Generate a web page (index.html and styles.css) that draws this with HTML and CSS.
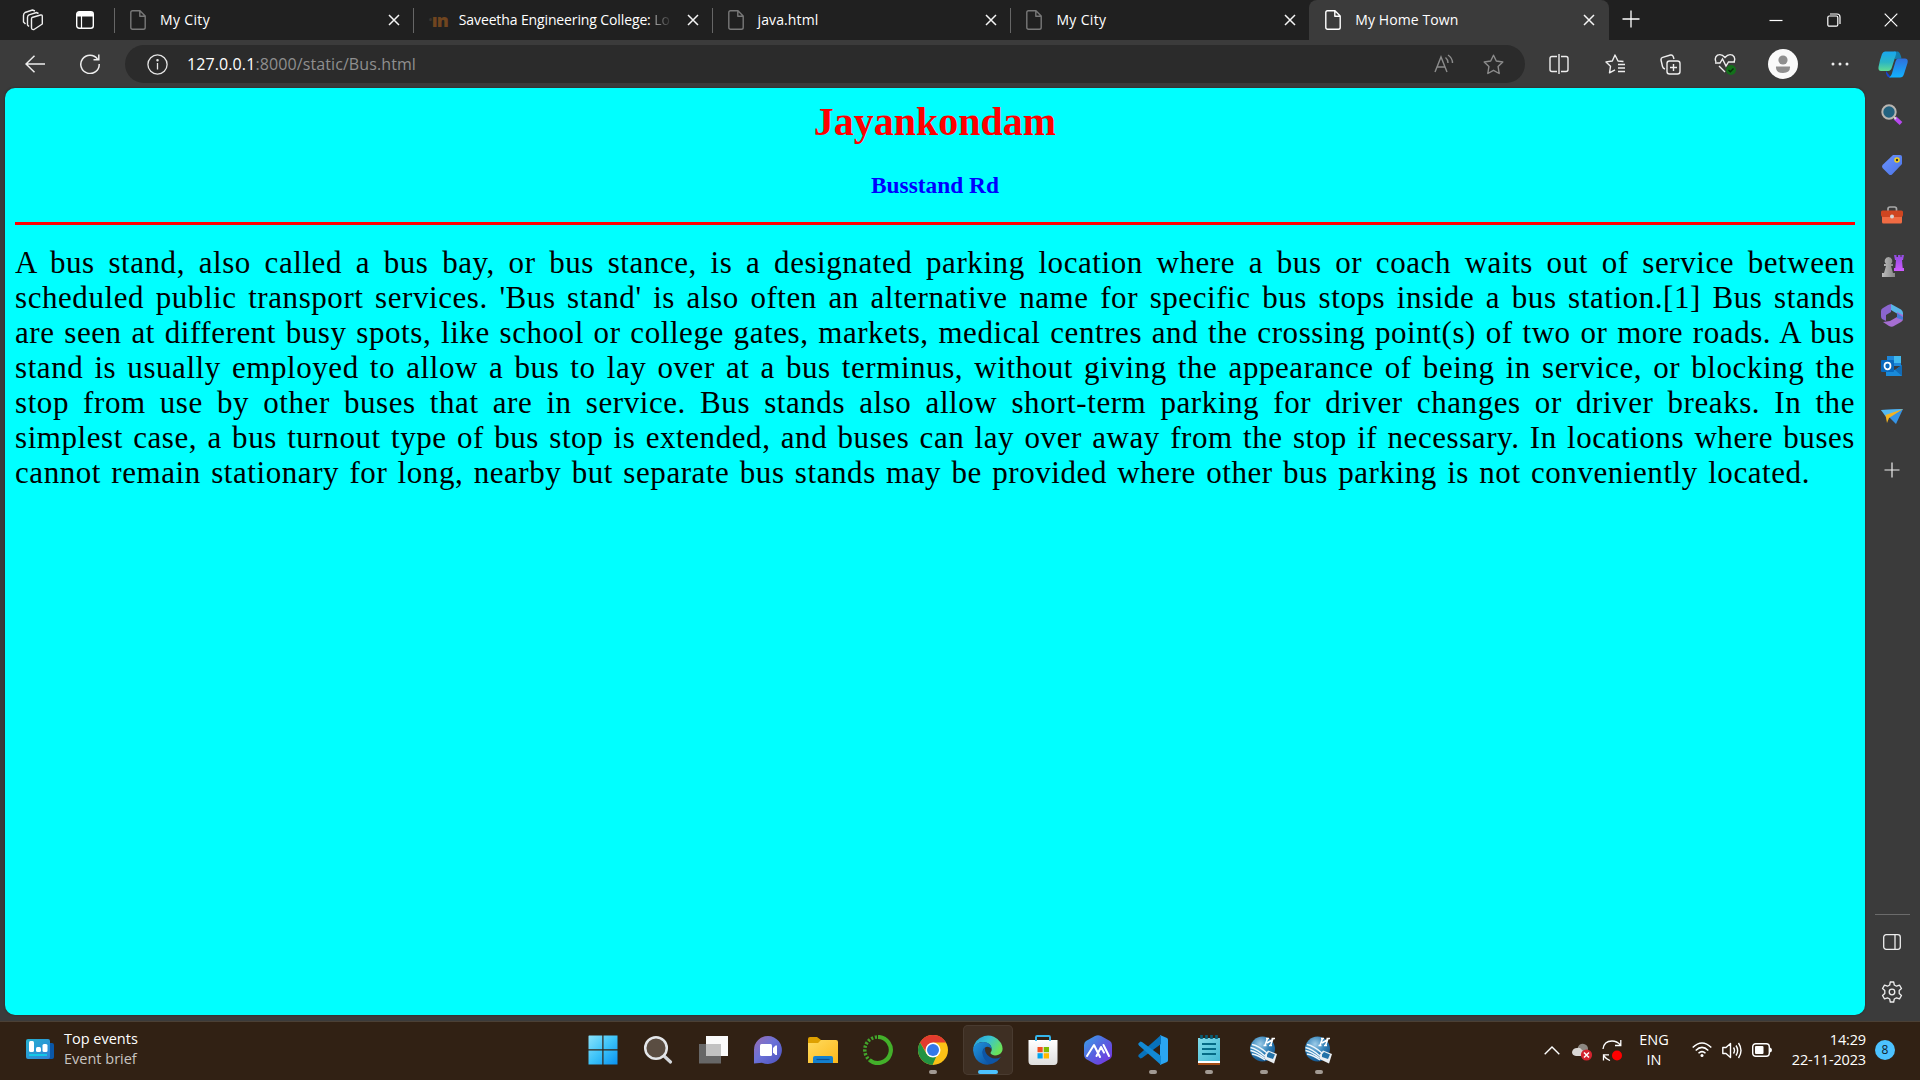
FILE: index.html
```
<!DOCTYPE html>
<html lang="en">
<head>
<meta charset="utf-8">
<title>My Home Town</title>
<link rel="stylesheet" href="styles.css">
</head>
<body>
<svg class="defs" width="0" height="0">
  <defs>
    <linearGradient id="gWin" x1="0" y1="0" x2="1" y2="1"><stop offset="0" stop-color="#8be3fb"/><stop offset=".5" stop-color="#3cc3f9"/><stop offset="1" stop-color="#0a91f0"/></linearGradient>
    <linearGradient id="gChat" x1="0" y1="0" x2="1" y2="1"><stop offset="0" stop-color="#9a6cb0"/><stop offset=".45" stop-color="#6c72d8"/><stop offset="1" stop-color="#4b50bd"/></linearGradient>
    <linearGradient id="gFolder" x1="0" y1="0" x2="1" y2="1"><stop offset="0" stop-color="#ffdb5e"/><stop offset="1" stop-color="#fcb81b"/></linearGradient>
    <linearGradient id="gEdge" x1="0" y1="0" x2="1" y2=".5"><stop offset="0" stop-color="#2397d8"/><stop offset=".5" stop-color="#38c2d5"/><stop offset="1" stop-color="#69e25a"/></linearGradient>
    <linearGradient id="gEdge2" x1="0" y1="0" x2="1" y2="1"><stop offset="0" stop-color="#2196e0"/><stop offset="1" stop-color="#0a4b9c"/></linearGradient>
    <linearGradient id="gHex" x1="0" y1="0" x2="1" y2="1"><stop offset="0" stop-color="#39a4e8"/><stop offset=".5" stop-color="#5760e0"/><stop offset="1" stop-color="#7a2ee0"/></linearGradient>
    <linearGradient id="gCopA" x1="0" y1="0" x2="0" y2="1"><stop offset="0" stop-color="#18a7f0"/><stop offset=".55" stop-color="#2bb5c5"/><stop offset="1" stop-color="#62dc92"/></linearGradient>
    <linearGradient id="gCopB" x1="0" y1="0" x2="0" y2="1"><stop offset="0" stop-color="#2f6fdc"/><stop offset="1" stop-color="#12b2ff"/></linearGradient>
    <linearGradient id="gTag" x1="0" y1="0" x2="1" y2="1"><stop offset="0" stop-color="#6b93ff"/><stop offset="1" stop-color="#4a73e6"/></linearGradient>
    <linearGradient id="gRook" x1="0" y1="0" x2="0" y2="1"><stop offset="0" stop-color="#8f4be0"/><stop offset="1" stop-color="#d05cff"/></linearGradient>
    <linearGradient id="gPawn" x1="0" y1="0" x2="1" y2="0"><stop offset="0" stop-color="#bdbdbd"/><stop offset="1" stop-color="#858585"/></linearGradient>
    <radialGradient id="gGlobe" cx=".4" cy=".3" r=".8"><stop offset="0" stop-color="#9ccbe8"/><stop offset=".5" stop-color="#2f80b8"/><stop offset="1" stop-color="#0e4a80"/></radialGradient>
    <linearGradient id="gWid" x1="0" y1="0" x2="1" y2="1"><stop offset="0" stop-color="#26b0d0"/><stop offset="1" stop-color="#2f82d8"/></linearGradient>
    <linearGradient id="gNote" x1="0" y1="0" x2="1" y2="1"><stop offset="0" stop-color="#7fdbe9"/><stop offset="1" stop-color="#42b8d3"/></linearGradient>
    <linearGradient id="gBag" x1="0" y1="0" x2="0" y2="1"><stop offset="0" stop-color="#fff"/><stop offset="1" stop-color="#dedede"/></linearGradient>
    <symbol id="file" viewBox="0 0 16 20"><path d="M2.500.8H10L15.200 6V17.400Q15.200 19.200 13.400 19.200H2.600Q.8 19.200.8 17.400V2.600Q.8.8 2.500.8ZM9.800 1V6.200H15" fill="none" stroke="currentColor" stroke-width="1.400" stroke-linejoin="round"/></symbol>
    <symbol id="cross" viewBox="0 0 12 12"><path d="M1 1L11 11M11 1L1 11" stroke="#f5f5f5" stroke-width="1.500" fill="none"/></symbol>
    <symbol id="globe" viewBox="0 0 30 30">
      <circle cx="13.500" cy="14" r="12.500" fill="url(#gGlobe)"/>
      <g fill="none" stroke="#eef7fc" stroke-width="1.300"><path d="M1.500 12.500Q8 14 16 21"/><path d="M1.500 15.500Q8 17 15.500 23"/><path d="M3 19Q9 20 16 25"/><path d="M3 9.500Q10 11 18 18"/></g>
      <path d="M16 10.500L18.500 3.500M21.500 10.500L24 3.500M17 3.500H20M22.500 3.500H26M14.500 10.500H17.500M20 10.500H23M18 8L23 5" stroke="#fff" stroke-width="1.600" fill="none"/>
      <path d="M15.500 20L19 15.500L28 19L25 28.500L15.500 24Z" fill="#e9eef2"/><path d="M18 19.500L20 17L26 19.500L24 24L18 22Z" fill="#2372a8"/>
    </symbol>
  </defs>
</svg>

<div class="screen">
  <header class="tabstrip">
    <div class="strip-tools">
      <svg width="22" height="22" viewBox="0 0 22 22" fill="none" stroke="#eee" stroke-width="1.400" stroke-linejoin="round"><path d="M10 8.500L18.500 6Q20.300 5.500 20.300 7.500V15L12 20.500Q9.500 21 9.500 18.500V10Q9.500 8.800 10 8.500Z"/><path d="M7 17.500L5.500 16V8.500Q5.500 6.500 7 5.800L14.500 3.500L16.500 4.500"/><path d="M3.500 15L1.500 13V6.500Q1.500 4.500 3 3.500L10.500 1L13 2"/></svg>
      <svg width="18" height="18" viewBox="0 0 18 18"><rect x=".7" y=".7" width="16.600" height="16.600" rx="2.500" fill="none" stroke="#fff" stroke-width="1.400"/><path d="M1 3Q1 1 3 1H15Q17 1 17 3V5.500H1Z" fill="#fff"/><path d="M5.500 5V17" stroke="#fff" stroke-width="1.200"/></svg>
    </div>
    <div class="tab"><svg class="favicon" width="16" height="20"><use href="#file"/></svg><span class="tab-title">My City</span><svg class="tab-close" width="12" height="12"><use href="#cross"/></svg></div>
    <div class="tab"><span class="moodle"><i>•</i>ın</span><span class="tab-title long">Saveetha Engineering College: <em>Lo</em></span><svg class="tab-close" width="12" height="12"><use href="#cross"/></svg></div>
    <div class="tab"><svg class="favicon" width="16" height="20"><use href="#file"/></svg><span class="tab-title mid">java.html</span><svg class="tab-close" width="12" height="12"><use href="#cross"/></svg></div>
    <div class="tab"><svg class="favicon" width="16" height="20"><use href="#file"/></svg><span class="tab-title">My City</span><svg class="tab-close" width="12" height="12"><use href="#cross"/></svg></div>
    <div class="tab active"><svg class="favicon" width="16" height="20"><use href="#file"/></svg><span class="tab-title mid">My Home Town</span><svg class="tab-close" width="12" height="12"><use href="#cross"/></svg></div>
    <svg class="new-tab" width="18" height="18" viewBox="0 0 18 18"><path d="M9 .5V17.500M.5 9H17.500" stroke="#fff" stroke-width="1.300"/></svg>
    <div class="window-controls">
      <svg width="14" height="14" viewBox="0 0 14 14"><path d="M.5 7.500H13.500" stroke="#fff" stroke-width="1.200"/></svg>
      <svg width="14" height="14" viewBox="0 0 14 14" fill="none" stroke="#fff" stroke-width="1.200"><rect x=".8" y="3" width="10" height="10.200" rx="1.500"/><path d="M3 1H10Q13 1 13 4V11"/></svg>
      <svg width="14" height="14" viewBox="0 0 14 14"><path d="M.7.7L13.300 13.300M13.300.7L.7 13.300" stroke="#fff" stroke-width="1.200"/></svg>
    </div>
  </header>

  <div class="toolbar">
    <div class="nav">
      <svg width="20" height="18" viewBox="0 0 20 18" fill="none" stroke="#eee" stroke-width="1.500"><path d="M9.500.8L1 9L9.500 17.200M1 9H20"/></svg>
      <svg width="20" height="20" viewBox="0 0 20 20" fill="none" stroke="#eee" stroke-width="1.500"><path d="M17.500 5A9.200 9.200 0 1 0 19.200 10M18.800.5V5.800H13.500"/></svg>
    </div>
    <div class="address">
      <svg width="21" height="21" viewBox="0 0 21 21" fill="none" stroke="#e6e6e6" stroke-width="1.300"><circle cx="10.500" cy="10.500" r="9.600"/><path d="M10.500 9V15.500"/><circle cx="10.500" cy="6.300" r=".6" fill="#e6e6e6"/></svg>
      <span class="url"><b>127.0.0.1</b>:8000/static/Bus.html</span>
      <svg class="read" width="20" height="20" viewBox="0 0 20 20" fill="none" stroke="#8c8c8c" stroke-width="1.400"><path d="M1 18L7 3L13 18M3 13H11M11.500 3.500Q14 5.500 14 9M14 1Q18.500 4 18.500 9"/></svg>
      <svg class="star" width="21" height="21" viewBox="0 0 21 21" fill="none" stroke="#8c8c8c" stroke-width="1.400" stroke-linejoin="round"><path d="M10.500 1.200L13.300 7L19.800 8L15.100 12.600L16.200 19.500L10.500 16.300L4.800 19.500L5.900 12.600L1.200 8L7.700 7Z"/></svg>
    </div>
    <div class="actions">
      <svg width="20" height="20" viewBox="0 0 20 20" fill="none" stroke="#eee" stroke-width="1.400"><path d="M8 2.500H3Q1 2.500 1 4.500V15.500Q1 17.500 3 17.500H8M12 2.500H17Q19 2.500 19 4.500V15.500Q19 17.500 17 17.500H12M10 0V20"/></svg>
      <svg width="21" height="20" viewBox="0 0 21 20" fill="none" stroke="#eee" stroke-width="1.400" stroke-linejoin="round"><path d="M18.500 7.500L13 7L10 1L7.300 7L1 7.900L5.500 12.300L4.500 18.800L10 15.800M13 10.500H20M13 14H20M13 17.500H20"/></svg>
      <svg width="21" height="21" viewBox="0 0 21 21" fill="none" stroke="#eee" stroke-width="1.400"><rect x="7" y="7" width="13" height="13" rx="2.500"/><path d="M13.500 10V17M10 13.500H17M5 15Q3 14.500 2.500 12.500L1 6Q.7 4 2.700 3.400L10.500 1Q12.500.6 13.200 2.500L14 5"/></svg>
      <svg width="22" height="22" viewBox="0 0 22 22" fill="none" stroke="#eee" stroke-width="1.400"><path d="M2 9Q0 4.500 3.500 2.200Q7.500.3 11 4.500Q14.500.3 18.500 2.200Q22 4.500 20 9M1 10H6L8.500 6L12 13L14.500 9H21M5 13L11 19"/><circle cx="17" cy="17" r="5" fill="#13701b" stroke="none"/><path d="M14.500 17L16.300 18.800L19.500 15.500" stroke="#062d0a"/></svg>
      <svg width="30" height="30" viewBox="0 0 30 30"><circle cx="15" cy="15" r="15" fill="#fafafa"/><circle cx="15" cy="11" r="4.600" fill="#8f8f8f"/><path d="M8 17.500H22Q22.500 24 15 24Q7.500 24 8 17.500Z" fill="#8f8f8f"/></svg>
      <svg width="18" height="4" viewBox="0 0 18 4" fill="#eee"><circle cx="2" cy="2" r="1.500"/><circle cx="9" cy="2" r="1.500"/><circle cx="16" cy="2" r="1.500"/></svg>
      <svg width="30" height="27" viewBox="0 0 30 27"><path d="M8 20L13 26.500Q9 27 8 22Z" fill="#1747d0"/><path d="M16 .5H20Q22 1 23.500 7.500L17 8Z" fill="#137dae"/><path d="M7 .5H17Q19 .5 17.500 5L14 16Q13 20 10 20H3Q0 20 .5 16Q2 8 4 3Q5 .5 7 .5Z" fill="url(#gCopA)"/><path d="M20 7.500H27Q30.500 7.500 29.500 12L26 23Q25 26.500 22 26.500H11Q13.500 25 14.500 20.500L17.500 10.500Q18.500 7.500 20 7.500Z" fill="url(#gCopB)"/></svg>
    </div>
  </div>

  <div class="middle">
    <main class="page">
      <h1>Jayankondam</h1>
      <h3>Busstand Rd</h3>
      <hr>
      <p class="story">
        <span>A bus stand, also called a bus bay, or bus stance, is a designated parking location where a bus or coach waits out of service between</span>
        <span>scheduled public transport services. 'Bus stand' is also often an alternative name for specific bus stops inside a bus station.[1] Bus stands</span>
        <span>are seen at different busy spots, like school or college gates, markets, medical centres and the crossing point(s) of two or more roads. A bus</span>
        <span>stand is usually employed to allow a bus to lay over at a bus terminus, without giving the appearance of being in service, or blocking the</span>
        <span>stop from use by other buses that are in service. Bus stands also allow short-term parking for driver changes or driver breaks. In the</span>
        <span>simplest case, a bus turnout type of bus stop is extended, and buses can lay over away from the stop if necessary. In locations where buses</span>
        <span class="last">cannot remain stationary for long, nearby but separate bus stands may be provided where other bus parking is not conveniently located.</span>
      </p>
    </main>
    <aside class="sidebar">
      <div class="side-apps">
        <svg width="22" height="22" viewBox="0 0 22 22"><path d="M14 14L20 19.500" stroke="#b648ee" stroke-width="4"/><path d="M12.500 12.500L15 15" stroke="#ddd" stroke-width="2"/><circle cx="8" cy="8" r="6.700" fill="#23627f" stroke="#b9b5b1" stroke-width="2"/></svg>
        <svg width="22" height="22" viewBox="0 0 22 22"><path d="M12 1H19Q21 1 21 3V10L11 20.500Q9.500 21.500 8 20.500L1.500 14Q.5 12.500 1.500 11Z" fill="url(#gTag)"/><circle cx="16" cy="6" r="2" fill="#333" stroke="#f3cf1d" stroke-width="1.600"/></svg>
        <svg width="22" height="18" viewBox="0 0 22 18"><path d="M7 5V3Q7 1 9 1H13.500Q15.500 1 15.500 3V5" fill="none" stroke="#a9a9a9" stroke-width="1.700"/><rect x="1" y="8" width="20" height="9.500" rx="1.500" fill="#f06b43"/><path d="M0 6Q0 4.500 1.500 4.500H20.500Q22 4.500 22 6V9Q22 11 20 11H2Q0 11 0 9Z" fill="#cf4520"/><circle cx="11" cy="10.500" r="2" fill="#d5d5d5"/></svg>
        <svg width="23" height="24" viewBox="0 0 23 24"><path d="M13 1H15.500V3H17V1H19.500V3H20.500V1H23L22 6H21L21.700 14H23V17H13V14H14.300L15 6H14Z" fill="url(#gRook)"/><path d="M7.500 3A4 4 0 0 1 10 10H12V12H10L12 19H14V23H1V19H3L5 12H3V10H5A4 4 0 0 1 7.500 3Z" fill="url(#gPawn)"/></svg>
        <svg width="22" height="23" viewBox="0 0 22 23"><path d="M7 1L10 0V8L5 11V17L1 15Q0 14 0 12V7Q0 5 2 4Z" fill="#8b65cf"/><path d="M10 0L20 5.500Q22 7 22 9V13L15 9L10 6Z" fill="#58b5e9"/><path d="M22 11V15Q22 17 20 18L12 22.500Q10 23 8 22L2 18L9 17L16 13V8Z" fill="#a66ed2"/><path d="M16 9L22 13V16L16 14Z" fill="#4779d9"/></svg>
        <svg width="22" height="20" viewBox="0 0 22 20"><path d="M6 0H20V10H6Z" fill="#1c86d9"/><path d="M13 0H20V7H13Z" fill="#40b9ed"/><path d="M5 11L14 14L21 9V20H5Z" fill="#198ada"/><path d="M14 14L21 9V20Z" fill="#126bb5"/><rect y="4" width="13" height="12" rx="1" fill="#0969bd"/><ellipse cx="6.500" cy="10" rx="3" ry="3.300" fill="none" stroke="#fff" stroke-width="1.700"/></svg>
        <svg width="22" height="17" viewBox="0 0 22 17"><path d="M0 2L22 1L15 16L9 10Z" fill="#3694e6"/><path d="M0 2L22 1L5 9Z" fill="#55b8f0"/><path d="M4.500 7L22 1L8 10L6 15Z" fill="#f4b321"/></svg>
        <svg class="add" width="16" height="16" viewBox="0 0 16 16"><path d="M8 .5V15.500M.5 8H15.500" stroke="#eee" stroke-width="1.200"/></svg>
      </div>
      <div class="side-bottom">
        <svg width="18" height="16" viewBox="0 0 18 16" fill="none" stroke="#eee" stroke-width="1.300"><rect x=".7" y=".7" width="16.600" height="14.600" rx="2.500"/><path d="M12 1V15"/></svg>
        <svg width="22" height="22" viewBox="0 0 22 22" fill="none" stroke="#eee" stroke-width="1.300" stroke-linejoin="round"><circle cx="11" cy="11" r="2.800"/><path d="M9.300 1H12.700L13.300 4L15.500 5.200L18.500 4.200L20.500 7.500L18.200 9.600V12.400L20.500 14.500L18.500 17.800L15.500 16.800L13.300 18L12.700 21H9.300L8.700 18L6.500 16.800L3.500 17.800L1.500 14.500L3.800 12.400V9.600L1.500 7.500L3.500 4.200L6.500 5.200L8.700 4Z"/></svg>
      </div>
    </aside>
  </div>

  <footer class="taskbar">
    <div class="widgets">
      <svg width="28" height="20" viewBox="0 0 28 20"><rect x="18" y="4" width="10" height="16" rx="2" fill="#0a57a8"/><rect width="24" height="20" rx="2" fill="url(#gWid)"/><rect x="3" y="2" width="5" height="11" rx="1.500" fill="#fff"/><rect x="10" y="8" width="5" height="5" rx="1.500" fill="#fff"/><rect x="16.500" y="5" width="5" height="8" rx="1.500" fill="#fff"/><path d="M3 16H21" stroke="#12cfe9" stroke-width="1.800"/></svg>
      <div class="widget-text"><span>Top events</span><span class="dim">Event brief</span></div>
    </div>
    <div class="apps">
      <div class="app"><svg width="30" height="30" viewBox="0 0 30 30"><path d="M1 .5H14.300V14.300H.5V1ZM15.500.5H29.500V14.300H15.500ZM.5 15.500H14.300V29.500H.5ZM15.500 15.500H29.500V29.500H15.500Z" fill="url(#gWin)"/></svg></div>
      <div class="app"><svg width="30" height="30" viewBox="0 0 30 30"><path d="M20 20L27.500 27" stroke="#d4d7db" stroke-width="3.200" stroke-linecap="round"/><circle cx="13" cy="13" r="10.800" fill="#5a4d42" stroke="#e4e6e9" stroke-width="2.500"/></svg></div>
      <div class="app"><svg width="30" height="30" viewBox="0 0 30 30"><rect x="1" y="9" width="22" height="19.500" fill="#676767"/><rect x="8" y="1" width="22" height="20" fill="#fafafa"/><rect x="8" y="9" width="15" height="12" fill="#c2c2c2"/></svg></div>
      <div class="app"><svg width="30" height="30" viewBox="0 0 30 30"><path d="M15 1A14 14 0 1 1 9 27.700L1 28.500V15A14 14 0 0 1 15 1Z" fill="url(#gChat)"/><rect x="7" y="9" width="12" height="12" rx="1.500" fill="#fff"/><path d="M20 13L22.500 10.500H24V20H22.500L20 17.500Z" fill="#fff"/></svg></div>
      <div class="app"><svg width="30" height="30" viewBox="0 0 30 30"><path d="M0 4Q0 2 2 2H9L13 5H17V12H0Z" fill="#dea000"/><path d="M0 8H10L13 5H28Q30 5 30 7V28H0Z" fill="url(#gFolder)"/><path d="M5 28V23Q5 21 7 21H23Q25 21 25 23V28Z" fill="#1380cf"/><path d="M8.500 24.500H21.500" stroke="#0a4e92" stroke-width="1.200"/></svg></div>
      <div class="app"><svg width="30" height="30" viewBox="0 0 30 30"><path d="M15 2A13 13 0 1 1 6.500 25" fill="none" stroke="#43b02a" stroke-width="4.200"/><path d="M14 2A13 13 0 0 0 6.500 25" fill="none" stroke="#43a52c" stroke-width="3.500" stroke-dasharray="2.200 1.600"/></svg></div>
      <div class="app run"><svg width="30" height="30" viewBox="0 0 30 30"><circle cx="15" cy="15" r="15" fill="#fbc116"/><path d="M2 7.500A15 15 0 0 1 28 7.500H15L9 18.500Z" fill="#e33b2e"/><path d="M2 7.500L8.500 18.700Q12 24 18.500 21L14.500 30A15 15 0 0 1 2 7.500Z" fill="#229342"/><circle cx="15" cy="15" r="7.500" fill="#fff"/><circle cx="15" cy="15" r="6" fill="#3478e8"/></svg></div>
      <div class="app run current"><svg width="30" height="30" viewBox="0 0 30 30"><path d="M0 15A15 15 0 0 1 28 8Q32 16 26 19.500Q21 21.500 18 19Q17 18 18.500 16Q20 8 10 7Q3 7 0 15Z" fill="url(#gEdge)"/><path d="M0 15Q1 7.500 10 7Q19 7.500 18.700 14.500Q17 11 13 12Q9 14 10 19Q12 27 20 28.500Q15 30.500 10 29Q1 26 0 15Z" fill="url(#gEdge2)"/><path d="M12 12.500Q8 15 10 21Q13 29 20 28.500Q25 26.500 28 22Q22 25 17 22Q11.500 19 12 12.500Z" fill="#0e55a5"/></svg></div>
      <div class="app"><svg width="30" height="30" viewBox="0 0 30 30"><path d="M8 8V2Q8 1 9 1H21Q22 1 22 2V8" fill="none" stroke="#35b6ec" stroke-width="1.800"/><path d="M.5 5H29.500V26Q29.500 30 26 30H4Q.5 30 .5 26Z" fill="url(#gBag)"/><path d="M8 6V2M22 6V2" stroke="#35b6ec" stroke-width="1.800"/><path d="M9.500 12H14.700V17.200H9.500Z" fill="#f25022"/><path d="M15.700 12H21V17.200H15.700Z" fill="#7fba00"/><path d="M9.500 18.200H14.700V23.500H9.500Z" fill="#00a4ef"/><path d="M15.700 18.200H21V23.500H15.700Z" fill="#ffb900"/></svg></div>
      <div class="app"><svg width="30" height="30" viewBox="0 0 30 30"><path d="M12 1Q15-.5 18 1L27 6Q29 7.500 29 10V20Q29 22.500 27 24L18 29Q15 30.500 12 29L3 24Q1 22.500 1 20V10Q1 7.500 3 6Z" fill="url(#gHex)"/><path d="M4 21L11 10L17 22M13.500 21L18 12L21 17.500M20.500 10L26 21" fill="none" stroke="#fff" stroke-width="2" stroke-linejoin="round" stroke-linecap="round"/></svg></div>
      <div class="app run"><svg width="30" height="30" viewBox="0 0 30 30"><path d="M22 0L29 3Q30 3.500 30 5V25Q30 26.500 29 27L22 30Z" fill="#2aa5f2"/><path d="M23 0V9L4 23L2.500 23.500L.3 21.500Q0 20.500 1 19.500Z" fill="#0872bb"/><path d="M23 30V21L4 7L2.500 6.500L.3 8.500Q0 9.500 1 10.500Z" fill="#1289d4"/></svg></div>
      <div class="app run"><svg width="30" height="30" viewBox="0 0 30 30"><path d="M4 26H26V30H4Z" fill="#a54c12"/><path d="M4 24H26V28H4Z" fill="#fff"/><path d="M4 3H26V26H4Z" fill="url(#gNote)"/><path d="M8 9H22M8 14H22M8 19H22" stroke="#056b86" stroke-width="1.900"/><path d="M7.500 0V4M12.500 0V4M17.500 0V4M22.500 0V4" stroke="#075f78" stroke-width="2.600"/></svg></div>
      <div class="app run"><svg width="30" height="30"><use href="#globe"/></svg></div>
      <div class="app run"><svg width="30" height="30"><use href="#globe"/></svg></div>
    </div>
    <div class="tray">
      <svg width="16" height="9" viewBox="0 0 16 9"><path d="M.7 8.300L8 1L15.300 8.300" fill="none" stroke="#fff" stroke-width="1.400"/></svg>
      <svg class="cloud" width="21" height="18" viewBox="0 0 21 18"><path d="M6 4Q8 0 12 1Q16 2 16 6L14 12H5Z" fill="#8d8882"/><path d="M4 13Q0 12.500 0 9Q1 5 5 5Q8 4 10 7L14 10V13Z" fill="#d9d7d5"/><circle cx="14.500" cy="12" r="5.600" fill="#d3232e"/><path d="M12 9.500L17 14.500M17 9.500L12 14.500" stroke="#fff" stroke-width="1.500"/></svg>
      <svg class="sync" width="20" height="21" viewBox="0 0 20 21"><path d="M1 9Q2 1 10 1Q15 1 18.500 5M18.800 0V5.500H13M8 20.500Q4 19 1.500 15.500M1.500 20.500V14.800H7" fill="none" stroke="#fff" stroke-width="1.300"/><circle cx="15" cy="15.500" r="5" fill="#f00"/></svg>
      <div class="lang"><span>ENG</span><span>IN</span></div>
      <svg class="wifi" width="20" height="16" viewBox="0 0 20 16" fill="none" stroke="#fff" stroke-width="1.500"><path d="M.7 5.500Q10-3.500 19.300 5.500M3.700 8.500Q10 2.300 16.300 8.500M6.500 11.300Q10 8 13.500 11.300"/><circle cx="10" cy="13.500" r="1.500" fill="#fff" stroke="none"/></svg>
      <svg class="sound" width="20" height="17" viewBox="0 0 20 17" fill="none" stroke="#fff" stroke-width="1.400" stroke-linejoin="round"><path d="M.8 5.500H4L8.500 1.500V15.500L4 11.500H.8ZM11.500 5.500Q13.500 8.500 11.500 11.500M14 3.500Q17.300 8.500 14 13.500M16.500 1Q21.500 8.500 16.500 16"/></svg>
      <svg class="battery" width="20" height="14" viewBox="0 0 20 14"><rect x=".7" y=".7" width="16.600" height="12.600" rx="3" fill="none" stroke="#fff" stroke-width="1.400"/><rect x="3" y="3" width="8.500" height="8" rx="1" fill="#fff"/><path d="M18 4.500Q20 5 20 7Q20 9 18 9.500Z" fill="#fff"/></svg>
      <div class="clock"><span>14:29</span><span>22-11-2023</span></div>
      <span class="count">8</span>
    </div>
  </footer>
</div>
</body>
</html>
```
FILE: styles.css
```
* { box-sizing: border-box; }
body {
  margin: 0;
  overflow: hidden;
  background: #3b3b3b;
  font-family: "Open Sans", "Noto Sans", sans-serif;
  color: #fff;
}
svg { display: block; flex: none; }
.defs { position: absolute; }
.screen {
  width: 1920px;
  height: 1080px;
  display: grid;
  grid-template-rows: 40px 48px 933px 59px;
}

/* tab strip */
.tabstrip { display: flex; background: #202020; }
.strip-tools {
  width: 114px;
  display: flex;
  align-items: center;
  gap: 32px;
  padding-left: 22px;
}
.tab {
  width: 298.800px;
  display: flex;
  align-items: center;
  padding: 0 13px 0 16px;
  color: #787878;
  background: linear-gradient(#666, #666) 0 8px / 1px 25px no-repeat;
}
.tab.active {
  width: 300px;
  padding-right: 14px;
  background: #3b3b3b;
  border-radius: 8px 8px 0 0;
  color: #fff;
}
.tab-title {
  flex: 1;
  margin-left: 14px;
  padding-bottom: 2px;
  color: #fff;
  font-size: 14px;
  white-space: nowrap;
  letter-spacing: .35px;
}
.tab-title.mid { letter-spacing: .1px; }
.tab-title.long { margin-left: 11px; letter-spacing: -.12px; }
.long em {
  font-style: normal;
  background: linear-gradient(90deg, #aaa, #333);
  -webkit-background-clip: text;
  background-clip: text;
  color: transparent;
}
.moodle {
  width: 19px;
  font-size: 18px;
  line-height: 20px;
  font-weight: 800;
  color: #70451f;
  letter-spacing: -1px;
  white-space: nowrap;
  display: flex;
}
.moodle i { font-size: 8px; color: #3a332e; width: 3px; }
.new-tab { margin: 10px 0 0 12.500px; }
.window-controls { margin-left: auto; display: flex; align-items: center; gap: 43.500px; padding: 0 22px 1px 0; }

/* toolbar */
.toolbar { display: flex; align-items: center; }
.nav { width: 125px; display: flex; align-items: center; padding-left: 25px; gap: 35px; }
.address {
  width: 1400px;
  height: 38px;
  border-radius: 19px;
  background: #2b2b2b;
  display: flex;
  align-items: center;
  padding-left: 22px;
}
.url { margin-left: 19px; font-size: 16px; color: #8f8f8f; letter-spacing: .1px; }
.url b { font-weight: 400; color: #fff; }
.read { margin-left: auto; }
.star { margin: 0 21px 0 29px; }
.actions {
  flex: 1;
  display: grid;
  grid-template-columns: 56px 56px 54px 56px 60px 54px 52px;
  align-items: center;
  justify-items: center;
  padding-left: 6px;
}

/* page viewport */
.middle { display: grid; grid-template-columns: 1865px 55px; }
.page {
  margin: 0 0 6px 5px;
  padding: 0 10px;
  border-radius: 10px;
  background: #0ff;
  font-family: "Liberation Serif", serif;
  color: #000;
  box-shadow: 0 0 2px #222;
}
h1 {
  margin: 0;
  padding-top: 11px;
  font-size: 40px;
  line-height: 46px;
  text-align: center;
  color: #f00;
}
h3 {
  margin: 26px 0 0;
  font-size: 23.400px;
  line-height: 28px;
  text-align: center;
  color: #00f;
}
hr { height: 3px; margin: 23px 0 0; border: 0; background: #f00; }
.story { margin: 20px 0 0; font-size: 31px; line-height: 35px; letter-spacing: .57px; }
.story span { display: block; white-space: nowrap; text-align: justify; text-align-last: justify; }
.story .last { width: 1795px; }

/* sidebar */
.sidebar { display: flex; flex-direction: column; align-items: center; padding-right: 1px; }
.side-apps { display: grid; grid-auto-rows: 50.300px; place-items: center; padding-top: 1.500px; }
.add { margin-top: 7px; }
.side-bottom {
  width: 35px;
  margin-top: auto;
  height: 107px;
  border-top: 1px solid #6b6b6b;
  display: grid;
  grid-template-rows: 50px 50px;
  place-items: center;
  padding-top: 2px;
}

/* taskbar */
.taskbar {
  display: grid;
  grid-template-columns: 575px 772px 1fr;
  background: #312114;
  border-top: 1px solid #4b4035;
}
.widgets { display: flex; padding: 16px 0 0 26px; gap: 10px; }
.widgets svg { margin-top: 1px; }
.widget-text { display: flex; flex-direction: column; font-size: 14.500px; line-height: 20px; margin-top: -9px; }
.dim { color: #c8c4c0; }
.apps { display: grid; grid-template-columns: repeat(14, 55.100px); }
.app {
  position: relative;
  width: 50px;
  height: 50px;
  margin: 3px auto 0;
  display: grid;
  place-items: center;
  border-radius: 5px;
}
.run::after {
  content: "";
  position: absolute;
  bottom: 1px;
  left: 21px;
  width: 8px;
  height: 4px;
  border-radius: 2px;
  background: #a29a93;
}
.current { background: #3e2f23; box-shadow: inset 0 0 0 1px #493b30; }
.current::after { left: 15px; width: 20px; background: #4cc2ff; }
.tray { display: flex; align-items: center; padding: 0 0 2px 197px; font-size: 14.500px; }
.cloud { margin: 3px 0 0 12px; }
.sync { margin-left: 9px; }
.lang, .clock { display: flex; flex-direction: column; line-height: 20px; text-align: center; }
.lang { width: 40px; margin-left: 12px; }
.wifi { margin-left: 18px; }
.sound { margin-left: 10px; }
.battery { margin-left: 10px; }
.clock { width: 84px; margin-left: 10px; white-space: nowrap; align-items: flex-end; letter-spacing: -.15px; }
.count {
  width: 20px;
  height: 20px;
  margin-left: 9px;
  border-radius: 50%;
  background: #4cc2ff;
  color: #10202c;
  font-size: 12px;
  line-height: 20px;
  text-align: center;
}
```
